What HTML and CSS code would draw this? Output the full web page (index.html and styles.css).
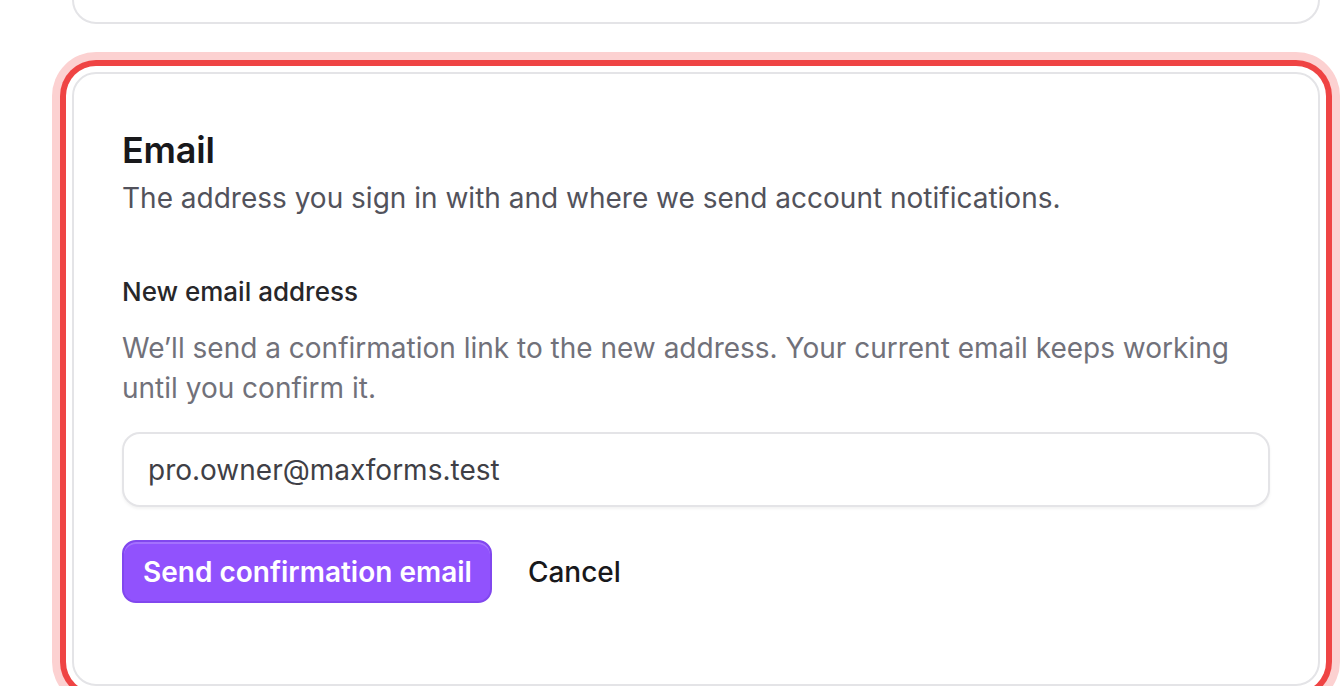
FILE: index.html
```html
<!DOCTYPE html>
<html lang="en">
<head>
<meta charset="utf-8">
<title>Email settings</title>
<link rel="stylesheet" href="styles.css">
</head>
<body>
<main class="stack">
  <section class="card card-prev" aria-hidden="true"></section>
  <section class="card card-email">
    <h2 class="card-title">Email</h2>
    <p class="card-desc">The address you sign in with and where we send account notifications.</p>
    <form class="form">
      <label class="field-label" for="email">New email address</label>
      <p class="field-help">We’ll send a confirmation link to the new address. Your current email keeps working until you confirm it.</p>
      <input class="field-input" id="email" type="email" value="pro.owner@maxforms.test">
      <div class="actions">
        <button type="button" class="btn btn-primary">Send confirmation email</button>
        <button type="button" class="btn btn-ghost">Cancel</button>
      </div>
    </form>
  </section>
</main>
</body>
</html>
```

FILE: styles.css
```css
* { box-sizing: border-box; }
html, body { margin: 0; padding: 0; background: #ffffff; }
body {
  font-family: Inter, "Noto Sans", "Liberation Sans", sans-serif;
  color: #18181b;
  overflow: hidden;
}
.stack {
  display: flex;
  flex-direction: column;
  gap: 48px;
  padding: 0 20px 0 72px;
  margin-top: -176px;
}
.card {
  background: #ffffff;
  border: 2px solid #e4e4e7;
  border-radius: 24px;
}
.card-prev { height: 200px; }
.card-email {
  padding: 56px 48px 81px 48px;
  box-shadow: 0 0 0 6px #ffffff, 0 0 0 12px #ef4444, 0 0 0 20px #fcd1d1;
  border-radius: 24px;
}
.card-title {
  margin: 0;
  font-size: 36px;
  line-height: 40px;
  font-weight: 600;
  color: #18181b;
  letter-spacing: -0.2px;
}
.card-desc {
  margin: 8px 0 0 0;
  font-size: 28px;
  line-height: 40px;
  color: #52525b;
}
.form {
  display: flex;
  flex-direction: column;
  margin-top: 54px;
}
.field-label {
  font-size: 26px;
  line-height: 40px;
  font-weight: 500;
  color: #27272a;
}
.field-help {
  margin: 16px 0 0 0;
  font-size: 28px;
  line-height: 40px;
  color: #71717a;
  max-width: 1120px;
}
.field-input {
  margin-top: 24px;
  height: 75px;
  width: 100%;
  border: 2px solid #e4e4e7;
  border-radius: 18px;
  padding: 0 24px;
  font-family: inherit;
  font-size: 28px;
  color: #3f3f46;
  background: #ffffff;
  box-shadow: 0 2px 3px rgba(0, 0, 0, 0.05);
  outline: none;
}
.actions {
  display: flex;
  align-items: center;
  gap: 14px;
  margin-top: 33px;
}
.btn {
  font-family: inherit;
  font-size: 28px;
  line-height: 40px;
  font-weight: 600;
  cursor: pointer;
  border-radius: 14px;
}
.btn-primary {
  height: 63px;
  padding: 0 18px 0 19px;
  color: #ffffff;
  background: #9152fd;
  border: 2px solid #8147ee;
  box-shadow: inset 0 2px 0 rgba(255, 255, 255, 0.18);
}
.btn-ghost {
  height: 63px;
  padding: 0 20px;
  color: #18181b;
  background: transparent;
  border: 2px solid transparent;
  font-weight: 500;
}
```
